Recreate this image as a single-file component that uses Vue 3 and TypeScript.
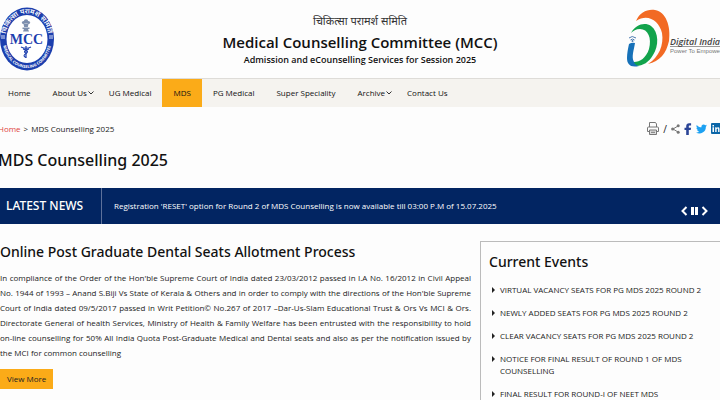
<script setup lang="ts">
interface NavItem {
  label: string
  active?: boolean
  menu?: boolean
}

const navItems: NavItem[] = [
  { label: 'Home' },
  { label: 'About Us', menu: true },
  { label: 'UG Medical' },
  { label: 'MDS', active: true },
  { label: 'PG Medical' },
  { label: 'Super Speciality' },
  { label: 'Archive', menu: true },
  { label: 'Contact Us' },
]

const events: string[] = [
  'VIRTUAL VACANCY SEATS FOR PG MDS 2025 ROUND 2',
  'NEWLY ADDED SEATS FOR PG MDS 2025 ROUND 2',
  'CLEAR VACANCY SEATS FOR PG MDS 2025 ROUND 2',
  'NOTICE FOR FINAL RESULT OF ROUND 1 OF MDS COUNSELLING',
  'FINAL RESULT FOR ROUND-I OF NEET MDS',
]
</script>

<template>
  <div class="page">
    <header class="masthead">
      <a class="seal" href="#" aria-label="MCC">
        <svg viewBox="0 0 56 64" width="56" height="64">
          <defs>
            <path id="sealTop" d="M5.500 32 A21.500 25.500 0 0 1 48.500 32" />
            <path id="sealBottom" d="M2.500 32 A24.500 29 0 0 0 51.500 32" />
          </defs>
          <ellipse cx="27" cy="32" rx="27" ry="31.500" fill="#1c3fae" />
          <ellipse cx="27" cy="32" rx="20.500" ry="24" fill="#fff" />
          <text class="seal-hindi"><textPath href="#sealTop" startOffset="50%" text-anchor="middle">चिकित्सा परामर्श समिति</textPath></text>
          <text class="seal-ring"><textPath href="#sealBottom" startOffset="50%" text-anchor="middle">MEDICAL COUNSELING COMMITTEE</textPath></text>
          <g fill="none" stroke="#dbe3f7" stroke-width="1">
            <path d="M1 29h4M1 31h4M49 29h4M49 31h4" />
          </g>
          <g fill="#7d8fae">
            <circle cx="26" cy="14.500" r="2.200" />
            <circle cx="23.500" cy="15.500" r="1.600" />
            <circle cx="28.500" cy="15.500" r="1.600" />
            <path d="M23.500 17h5l-.7 3h-3.600zM22.500 20.500h7v1.500h-7zM24 22h4l1 2.500h-6z" />
          </g>
          <text class="seal-mcc" x="26.500" y="37" text-anchor="middle">MCC</text>
          <path d="M26 39v12" stroke="#1c3fae" stroke-width="1.200" fill="none" />
          <path d="M21 40q5 2.500 10 0M23 42q7 2 3 4.500t0 4M29 42q-7 2-3 4.500" stroke="#1c3fae" stroke-width="1.100" fill="none" />
        </svg>
      </a>
      <div class="titles">
        <p class="hindi" lang="hi">चिकित्सा परामर्श समिति</p>
        <p class="org">Medical Counselling Committee (MCC)</p>
        <p class="tagline">Admission and eCounselling Services for Session 2025</p>
      </div>
      <a class="digital" href="#" aria-label="Digital India">
        <svg viewBox="0 0 94 60" width="94" height="60">
          <path d="M10 12C14 3 21 0 29 1C40 3 45 17 43 32C40 45 34 52 22 55C33 48 38 36 36 24C33 12 22 4 10 12Z" fill="#f26a24" />
          <path d="M5 24C10 15 19 13 25 17C33 23 33 37 27 46C23 53 17 57 10 57C8 56 7 54 8 53C14 53 20 49 23 40C26 29 22 20 14 20C10 20 7 22 5 24Z" fill="#12a34c" />
          <path d="M3 35Q6 33 9 34C8 41 5 48 8 53Q9 56 13 57C4 59 1 55 1 49C1 44 2 40 3 35Z" fill="#1671b8" />
          <g fill="none" stroke="#4f7db1" stroke-width="1">
            <path d="M3 29q3-3 7 0M4.500 31q2-2 4 0" />
          </g>
          <circle cx="6.500" cy="32" r="1" fill="#4f7db1" />
          <path d="M44 37.500h50" stroke="#999" stroke-width="1" />
          <text class="digital-name" x="44" y="36">Digital India</text>
          <text class="digital-tag" x="44" y="44">Power To Empower</text>
        </svg>
      </a>
    </header>

    <nav class="nav" aria-label="Main">
      <a v-for="item in navItems" :key="item.label" href="#" :class="{ active: item.active }">
        {{ item.label }}
        <svg v-if="item.menu" class="chevron" viewBox="0 0 6 4" width="6" height="4">
          <path d="M.5 .5L3 3L5.500 .5" fill="none" stroke="#333" />
        </svg>
      </a>
    </nav>

    <section class="intro">
      <div class="crumb-row">
        <div class="crumbs"><a href="#">Home</a><span>&gt;</span><span>MDS Counselling 2025</span></div>
        <div class="tools">
          <button type="button" aria-label="Print">
            <svg viewBox="0 0 12 13" width="12" height="13" fill="none" stroke="#777" stroke-width="1">
              <path d="M2.500 5V.5h6L9.500 2v3M2.500 9.500h-2V6q0-1 1-1h9q1 0 1 1v3.500h-2" />
              <path d="M2.500 8h7v4.500h-7zM4 10.300h4" fill="#ddd" />
            </svg>
          </button>
          <span class="slash">/</span>
          <a href="#" aria-label="Share">
            <svg viewBox="0 0 9 10" width="9" height="10">
              <path d="M7 2L2 5l5 3" fill="none" stroke="#777" />
              <g fill="#777"><circle cx="7.200" cy="1.800" r="1.500" /><circle cx="1.700" cy="5" r="1.600" /><circle cx="7.200" cy="8.200" r="1.500" /></g>
            </svg>
          </a>
          <a href="#" aria-label="Facebook">
            <svg viewBox="0 0 8 12" width="8" height="12"><path d="M2.200 12V7H.5V4.700h1.700V3.200C2.200 1.200 3.300.2 5.100.2h2v2.200H5.800c-.8 0-1 .4-1 1v1.300h2.300L6.700 7H4.800v5z" fill="#2b4597" /></svg>
          </a>
          <a href="#" aria-label="Twitter">
            <svg viewBox="0 0 24 24" width="11" height="12"><path d="M24 4.600c-.9.400-1.800.7-2.800.8 1-.6 1.800-1.600 2.200-2.700-1 .6-2 1-3.100 1.200A4.900 4.900 0 0 0 11.900 8.400C7.700 8.200 4.100 6.300 1.700 3.200c-1.300 2.200-.7 5.100 1.500 6.600-.8 0-1.600-.2-2.200-.6-.1 2.300 1.600 4.400 3.900 4.900-.7.200-1.500.2-2.200.1.600 2 2.400 3.400 4.600 3.400A9.900 9.900 0 0 1 0 19.500 14 14 0 0 0 21.500 7.100c1-.7 1.800-1.600 2.500-2.500z" fill="#1da1f2" /></svg>
          </a>
          <a href="#" aria-label="LinkedIn">
            <svg viewBox="0 0 9 11" width="9" height="11"><rect width="12" height="11" rx="1" fill="#0b66a8" /><path d="M1.500 4.300H3V9H1.500zM1.500 2H3v1.400H1.500zM4.200 4.300h1.400V5Q6.500 4 7.500 4.300 8.500 4.600 8.500 6v3H7.100V6.500q0-1-.7-1-.8 0-.8 1V9H4.200z" fill="#fff" /></svg>
          </a>
        </div>
      </div>
      <h1>MDS Counselling 2025</h1>
    </section>

    <section class="news">
      <h2>LATEST NEWS</h2>
      <a class="headline" href="#">Registration 'RESET' option for Round 2 of MDS Counselling is now available till 03:00 P.M of 15.07.2025</a>
      <div class="controls">
        <button type="button" aria-label="Previous"><svg viewBox="0 0 7 10" width="7" height="10"><path d="M5.500 1L1.500 5l4 4" fill="none" stroke="#fff" stroke-width="2" /></svg></button>
        <button type="button" aria-label="Pause"><svg viewBox="0 0 7 8" width="7" height="8"><path d="M0 0h3v8H0zM4 0h3v8H4z" fill="#fff" /></svg></button>
        <button type="button" aria-label="Next"><svg viewBox="0 0 7 10" width="7" height="10"><path d="M1.500 1l4 4-4 4" fill="none" stroke="#fff" stroke-width="2" /></svg></button>
      </div>
    </section>

    <main class="content">
      <article>
        <h2>Online Post Graduate Dental Seats Allotment Process</h2>
        <p>In compliance of the Order of the Hon'ble Supreme Court of India dated 23/03/2012 passed in I.A No. 16/2012 in Civil Appeal No. 1944 of 1993 – Anand S.Biji Vs State of Kerala &amp; Others and in order to comply with the directions of the Hon'ble Supreme Court of India dated 09/5/2017 passed in Writ Petition© No.267 of 2017 –Dar-Us-Slam Educational Trust &amp; Ors Vs MCI &amp; Ors. Directorate General of health Services, Ministry of Health &amp; Family Welfare has been entrusted with the responsibility to hold on-line counselling for 50% All India Quota Post-Graduate Medical and Dental seats and also as per the notification issued by the MCI for common counselling</p>
        <a class="more" href="#">View More</a>
      </article>
      <aside>
        <h2>Current Events</h2>
        <ul>
          <li v-for="event in events" :key="event"><a href="#">{{ event }}</a></li>
        </ul>
      </aside>
    </main>
  </div>
</template>

<style>
html,
body {
  height: 100%;
  overflow: hidden;
  background: #fdfdfd;
}
</style>

<style scoped>
.page {
  font-family: "Open Sans", "Noto Sans", sans-serif;
  font-size: 8px;
  line-height: 12px;
  color: #222;
  overflow: hidden;
}
h1, h2, p, ul {
  margin: 0;
  padding: 0;
}
h1, h2 {
  font-family: "Noto Sans", "Open Sans", sans-serif;
  font-weight: 500;
  color: #111;
}
a {
  color: inherit;
  text-decoration: none;
}
button {
  padding: 0;
  border: 0;
  background: none;
}
svg {
  display: block;
}
.masthead {
  display: grid;
  grid-template-columns: 94px 1fr 94px;
  align-items: center;
  height: 78px;
  border-bottom: 1px solid #dedcd8;
}
.seal-hindi {
  font-size: 7px;
  font-weight: 600;
  fill: #fff;
}
.seal-ring {
  font-size: 4px;
  font-weight: 700;
  fill: #fff;
}
.seal-mcc {
  font-family: "Liberation Serif", serif;
  font-size: 14px;
  font-weight: 700;
  fill: #1c3fae;
}
.titles {
  text-align: center;
  color: #111;
}
.hindi {
  font-size: 11px;
  line-height: 20px;
  color: #333;
}
.org {
  font-size: 15px;
  line-height: 22px;
  font-weight: 600;
}
.tagline {
  font-size: 9px;
  line-height: 14px;
  font-weight: 600;
}
.digital-name {
  font-size: 9px;
  font-style: italic;
  font-weight: 600;
  fill: #444;
}
.digital-tag {
  font-family: "Liberation Sans", sans-serif;
  font-size: 6px;
  fill: #777;
}
.nav {
  display: flex;
  background: #f5f3ef;
  line-height: 28px;
  font-weight: 500;
  color: #111;
}
.nav a {
  position: relative;
  padding: 0 11px;
}
.nav a:first-child {
  padding-left: 8px;
}
.nav .active {
  background: #fbab18;
}
.chevron {
  position: absolute;
  right: 4px;
  top: 12px;
}
.intro {
  height: 81px;
}
.crumb-row {
  display: flex;
  justify-content: space-between;
  align-items: center;
  padding-top: 15px;
}
.crumbs {
  display: flex;
  gap: 3px;
  margin-left: -2px;
}
.crumbs a {
  color: #e0443e;
}
.tools {
  display: flex;
  align-items: center;
  gap: 4px;
}
.slash {
  font-size: 10px;
}
h1 {
  margin: 13px 0 0 -2px;
  font-size: 16px;
  line-height: 24px;
}
.news {
  display: flex;
  align-items: stretch;
  background: #022562;
  color: #fff;
  line-height: 36px;
}
.news h2 {
  width: 95px;
  padding-left: 6px;
  border-right: 1px solid #5d719b;
  font-size: 12px;
  line-height: 36px;
  color: #fff;
}
.headline {
  flex: 1;
  padding-left: 12px;
}
.controls {
  display: flex;
  align-items: center;
  gap: 3px;
  padding: 10px 12px 0 0;
}
.content {
  display: grid;
  grid-template-columns: 2fr 1fr;
  padding-top: 17px;
}
article {
  padding-right: 9px;
}
article h2,
aside h2 {
  font-size: 14px;
  line-height: 22px;
}
article p {
  margin-top: 7px;
  line-height: 15px;
  text-align: justify;
}
.more {
  display: inline-block;
  margin-top: 9px;
  padding: 0 7px;
  line-height: 20px;
  background: #fbab18;
}
aside {
  padding: 9px 8px;
  border-top: 1px solid #bbb;
  border-left: 1px solid #bbb;
}
ul {
  margin-top: 11px;
  list-style: none;
}
li {
  display: flex;
  gap: 5px;
  padding: 0 8px 11px 3px;
}
li::before {
  content: "";
  margin-top: 3px;
  height: 0;
  border: 3px solid transparent;
  border-left-color: #222;
  border-right: 0;
}
</style>
